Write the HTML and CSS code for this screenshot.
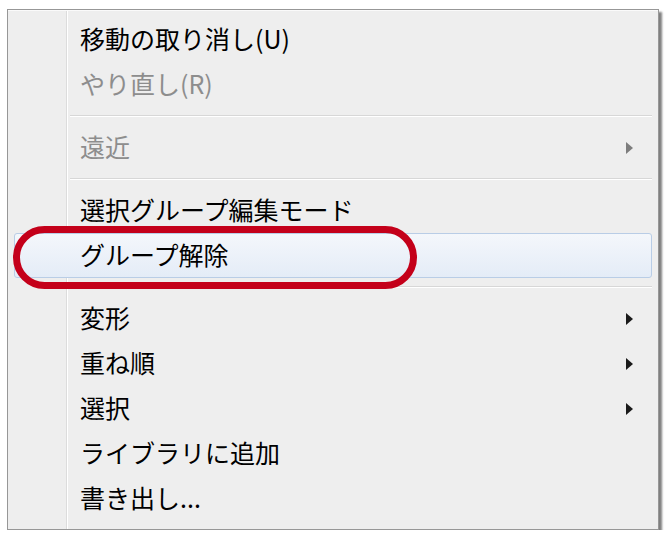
FILE: index.html
```html
<!DOCTYPE html>
<html lang="ja">
<head>
  <meta charset="UTF-8" />
  <title>コンテキストメニュー</title>
  <link rel="stylesheet" href="styles.css">
</head>
<body>

  <div class="menu">
    <ul class="menu-list">
      <li class="item">移動の取り消し(U)</li>
      <li class="item disabled">やり直し(R)</li>
      <li class="sep"></li>
      <li class="item disabled sub">遠近<span class="arrow"></span></li>
      <li class="sep"></li>
      <li class="item">選択グループ編集モード</li>
      <li class="item hover">グループ解除<span class="ring"></span></li>
      <li class="sep"></li>
      <li class="item sub">変形<span class="arrow"></span></li>
      <li class="item sub">重ね順<span class="arrow"></span></li>
      <li class="item sub">選択<span class="arrow"></span></li>
      <li class="item">ライブラリに追加</li>
      <li class="item">書き出し...</li>
    </ul>
  </div>

</body>
</html>
```

FILE: styles.css
```css
:root {
  --menu-bg: #eeeeee;
  --menu-border: #979797;
  --text: #000;
  --text-muted: #8d8d8d;
  --line: #d7d7d7;
  --mark: #c4001a;
}
* {
  box-sizing: border-box;
}
body {
  margin: 0;
  background: #fff;
  font-family: "Noto Sans CJK JP", "Noto Sans", sans-serif;
}
.menu {
  width: 652px;
  margin: 9px 0 0 7px;
  border: 1px solid var(--menu-border);
  box-shadow: 3px 3px 2px rgba(0, 0, 0, 0.5);
  /* gutter line on the left */
  background:
    linear-gradient(to right,
      transparent 58px, #dcdcdc 58px, #dcdcdc 59px,
      #fff 59px, #fff 60px, transparent 60px),
    var(--menu-bg);
}
.menu-list {
  list-style: none;
  margin: 0;
  padding: 6px 6px 8px 6px;
  border-top: 1px solid #fafafa;
}
.item {
  position: relative;
  display: flex;
  align-items: center;
  justify-content: space-between;
  height: 45px;
  padding: 0 19px 4px 66px;
  font-size: 25px;
  color: var(--text);
  white-space: nowrap;
}
.item.disabled {
  color: var(--text-muted);
}
.item.hover {
  border: 1px solid #b9cde6;
  border-radius: 3px;
  padding-left: 65px;
  background: linear-gradient(to bottom, #f4f7fb, #e4ecf7);
}
.sep {
  height: 18px;
  margin-left: 56px;
  background: linear-gradient(to bottom,
    transparent 8px, var(--line) 8px, var(--line) 9px,
    #fff 9px, #fff 10px, transparent 10px);
}
.arrow {
  width: 0;
  height: 0;
  margin-top: 4px;
  border-top: 6px solid transparent;
  border-bottom: 6px solid transparent;
  border-left: 7px solid #1a1a1a;
}
.disabled .arrow {
  border-left-color: #7d7d7d;
}
.ring {
  position: absolute;
  left: -2px;
  top: -8px;
  width: 404px;
  height: 63px;
  border: 7px solid var(--mark);
  border-radius: 32px;
}
```
